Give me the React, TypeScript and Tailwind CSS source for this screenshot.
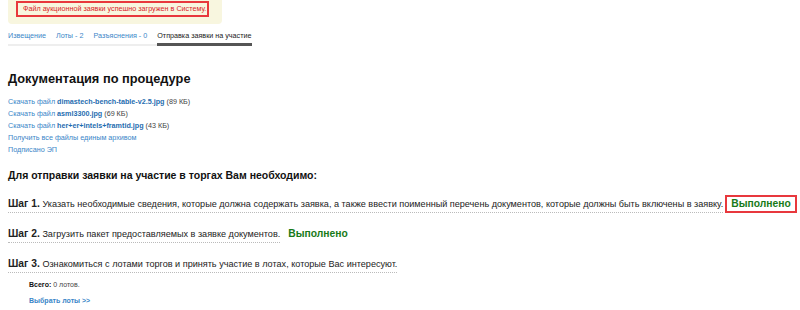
const links = [
  { name: 'dimastech-bench-table-v2.5.jpg', size: '(89 КБ)' },
  { name: 'asml3300.jpg', size: '(69 КБ)' },
  { name: 'her+er+intels+framtid.jpg', size: '(43 КБ)' },
];

const tabs = ['Извещение', 'Лоты - 2', 'Разъяснения - 0'];

function Step({ n, text, done, boxed }: { n: number; text: string; done?: boolean; boxed?: boolean }) {
  return (
    <div className="flex items-baseline whitespace-nowrap">
      <div className="border-b border-dotted border-[#bbb] pb-[2px] text-[9.1px] leading-[12px] text-[#222]">
        <span className="text-[10.3px] font-bold">Шаг {n}.</span> {text}
      </div>
      {done && (
        <span
          className={
            boxed
              ? 'ml-[2px] border-2 border-[#e8383d] px-[4px] py-[1px] text-[10.3px] font-bold leading-[12px] text-[#187a18]'
              : 'ml-[8px] text-[10.3px] font-bold leading-[12px] text-[#187a18]'
          }
        >
          Выполнено
        </span>
      )}
    </div>
  );
}

export default function App() {
  return (
    <div className="h-[310px] w-[800px] overflow-hidden bg-white px-[8px] font-['Liberation_Sans',Arial,sans-serif]">
      <div className="h-[24px] w-[214px] rounded-b-[4px] bg-[#f8f6df] px-[8px] pt-[1px]">
        <div className="flex h-[16px] w-[193px] items-center whitespace-nowrap border-2 border-[#e8383d] px-[5px] text-[7.2px] text-[#d9232a]">
          Файл аукционной заявки успешно загружен в Систему.
        </div>
      </div>

      <div className="mt-[7px] flex w-[244px] gap-[10px] whitespace-nowrap border-b-2 border-[#eee] text-[7.2px] leading-[9px]">
        {tabs.map(t => (
          <span key={t} className="pb-[4px] text-[#3a86c8]">{t}</span>
        ))}
        <span className="-mb-[2px] border-b-[3px] border-[#555] pb-[3px] text-[#222]">Отправка заявки на участие</span>
      </div>

      <h1 className="mt-[25px] whitespace-nowrap text-[12.8px] font-bold leading-[16px] text-[#111]">Документация по процедуре</h1>

      <div className="mt-[9px] flex flex-col whitespace-nowrap text-[7.2px] leading-[12px]">
        {links.map(l => (
          <div key={l.name}>
            <span className="text-[#3a86c8]">Скачать файл </span>
            <span className="font-bold text-[#1f6db0]">{l.name}</span>
            <span className="text-[#444]"> {l.size}</span>
          </div>
        ))}
        <div className="text-[#3a86c8]">Получить все файлы единым архивом</div>
        <div className="text-[#3a86c8]">Подписано ЭП</div>
      </div>

      <h2 className="mt-[12px] whitespace-nowrap text-[10.5px] font-bold leading-[14px] text-[#111]">
        Для отправки заявки на участие в торгах Вам необходимо:
      </h2>

      <div className="mt-[13px] flex flex-col gap-[15px]">
        <Step
          n={1}
          text="Указать необходимые сведения, которые должна содержать заявка, а также ввести поименный перечень документов, которые должны быть включены в заявку."
          done
          boxed
        />
        <Step n={2} text="Загрузить пакет предоставляемых в заявке документов." done />
        <Step n={3} text="Ознакомиться с лотами торгов и принять участие в лотах, которые Вас интересуют." />
      </div>

      <div className="ml-[21px] mt-[7px] whitespace-nowrap text-[7px] leading-[9px]">
        <div className="text-[#444]">
          <span className="font-bold text-[#111]">Всего:</span> 0 лотов.
        </div>
        <div className="mt-[7px] font-bold text-[#3a86c8]">Выбрать лоты &gt;&gt;</div>
      </div>
    </div>
  );
}
